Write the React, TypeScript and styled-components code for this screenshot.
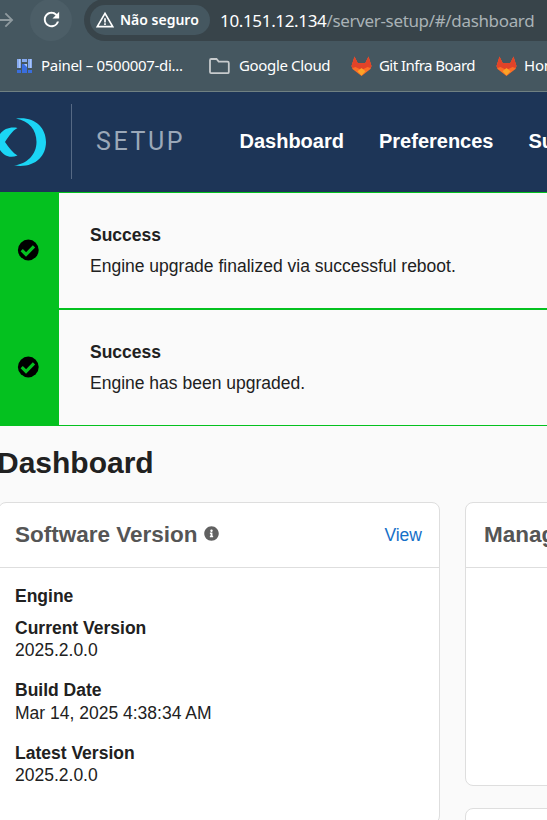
import React from "react";
import styled, { createGlobalStyle } from "styled-components";
import { MdArrowForward, MdRefresh, MdWarningAmber } from "react-icons/md";
import { FaInfoCircle } from "react-icons/fa";

const GlobalStyle = createGlobalStyle`
  * { box-sizing: border-box; }
  body { margin: 0; overflow: hidden; background: #fafafa; }
`;

const Page = styled.div`
  width: 547px;
  height: 820px;
  overflow: hidden;
  background: #fafafa;
  color: #212121;
  font: 17.5px/22px "Liberation Sans", Arial, sans-serif;
  white-space: nowrap;
`;

const BrowserChrome = styled.div`
  height: 92px;
  background: #455760;
  border-bottom: 1px solid #6f8082;
  font-family: "Noto Sans", "Open Sans", sans-serif;
  color: #fff;
`;

const AddressRow = styled.div`
  display: flex;
  align-items: center;
  height: 41px;
  padding-bottom: 2px;
`;

const ForwardButton = styled.div`
  display: flex;
  flex: none;
  width: 30px;
  margin-left: -5px;
  color: #8f9a9f;
  font-size: 22px;
`;

const ReloadButton = styled.div`
  display: flex;
  align-items: center;
  justify-content: center;
  flex: none;
  width: 42px;
  height: 42px;
  margin-left: 5px;
  border-radius: 50%;
  background: #4c5e67;
  font-size: 23px;
`;

const AddressBar = styled.div`
  display: flex;
  align-items: center;
  flex: none;
  width: 500px;
  height: 42px;
  margin-left: 12px;
  padding-left: 6px;
  border-radius: 21px;
  background: #38444a;
`;

const SecurityChip = styled.div`
  display: flex;
  align-items: center;
  width: 120px;
  height: 30px;
  padding-left: 5px;
  border-radius: 15px;
  background: #455760;
  font-size: 14px;
  font-weight: 600;
  svg { width: 20px; height: 20px; margin-right: 5px; }
`;

const Url = styled.span`
  margin-left: 10px;
  padding-top: 2px;
  font-size: 17px;
  letter-spacing: -0.34px;
`;

const UrlPath = styled.span`
  color: #a9b2b6;
`;

const BookmarkRow = styled.div`
  display: flex;
  height: 50px;
  padding-left: 16px;
`;

const Bookmark = styled.div<{ $width: number; $gap: number; $spacing: number }>`
  display: flex;
  align-items: center;
  flex: none;
  width: ${(p) => p.$width}px;
  gap: ${(p) => p.$gap}px;
  font-size: 15px;
  letter-spacing: ${(p) => p.$spacing}px;
  svg { flex: none; }
`;

const BookmarkLabel = styled.span`
  padding-bottom: 2px;
`;

const Header = styled.header`
  display: flex;
  align-items: center;
  height: 100px;
  background: #1d3557;
`;

const Logo = styled.svg`
  flex: none;
  width: 71px;
  height: 100px;
`;

const HeaderRule = styled.div`
  flex: none;
  width: 1px;
  height: 75px;
  margin-bottom: 1px;
  background: #566984;
`;

const ProductName = styled.div`
  flex: none;
  width: 143px;
  padding-left: 24px;
  color: #9ba8b8;
  font: 400 25px/30px Roboto, sans-serif;
  letter-spacing: 2.6px;
`;

const Nav = styled.nav`
  display: flex;
  gap: 35px;
  margin-left: 24.5px;
  padding-bottom: 2px;
  color: #fff;
  font-size: 20px;
  font-weight: 700;
`;

const Alert = styled.section`
  display: flex;
  width: 560px;
  height: 117px;
  border: solid #04c11f;
  border-width: 1px 0;
`;

const AlertIcon = styled.div`
  display: flex;
  align-items: center;
  width: 59px;
  padding: 0 0 2px 17px;
  margin: -1px 0;
  background: #04c11f;
`;

const AlertBody = styled.div`
  padding: 31px 0 0 31px;
`;

const AlertTitle = styled.div`
  font-weight: 700;
`;

const AlertText = styled.div`
  margin-top: 9px;
`;

const Title = styled.h1`
  margin: 19px 0 21px -3px;
  font-size: 30px;
  line-height: 36px;
`;

const Board = styled.main`
  display: grid;
  grid-template-columns: 442px 300px;
  column-gap: 25px;
  margin-left: -2px;
`;

const Column = styled.div`
  display: flex;
  flex-direction: column;
  gap: 22px;
`;

const Card = styled.section<{ $height: number }>`
  height: ${(p) => p.$height}px;
  border: 1px solid #dedede;
  border-radius: 8px;
  background: #fff;
`;

const CardHeader = styled.div<{ $inset: number }>`
  display: flex;
  align-items: center;
  height: 65px;
  padding: 0 17px 2px ${(p) => p.$inset}px;
  border-bottom: 1px solid #dedede;
`;

const CardTitle = styled.h2`
  margin: 0;
  padding-top: 1px;
  color: #555;
  font-size: 22.5px;
  line-height: 28px;
`;

const InfoIcon = styled(FaInfoCircle)`
  width: 15px;
  height: 15px;
  margin: 0 0 1px 6px;
  color: #616161;
`;

const ViewLink = styled.a`
  margin-left: auto;
  padding-top: 2px;
  color: #1670c8;
  font-size: 17.5px;
`;

const Details = styled.div`
  padding: 17px 16px;
`;

const Section = styled.div`
  margin-bottom: 10px;
  font-weight: 700;
`;

const Field = styled.div`
  height: 62.4px;
`;

const FieldLabel = styled.div`
  font-weight: 700;
  line-height: 22.4px;
`;

const GitLabIcon = () => (
  <svg width="21" height="20" viewBox="0 0 20 20">
    <path d="M0 10 3 .5 6.200 7h7.600L17 .5l3 9.500-1 3-9 7-9-7z" fill="#fc6d26" />
    <path d="M0 10 3 .5 6.200 7h7.600L17 .5l3 9.500-1 2-3-1-6 3-6-3-3 1z" fill="#e24329" />
    <path d="m10 12-4 3.200 4 4.400 4-4.400z" fill="#fca326" />
  </svg>
);

const FolderIcon = () => (
  <svg width="21" height="17" viewBox="0 0 21 17" fill="none" stroke="#c7cbcd" strokeWidth="1.8">
    <path d="M1 2.200q0-1.200 1.200-1.200h5.300l2.200 2.600h8.800q1.300 0 1.300 1.300v9q0 1.300-1.300 1.300H2.200Q1 15.200 1 14z" />
  </svg>
);

const PanelIcon = () => (
  <svg width="17" height="17" viewBox="0 0 17 17">
    <path d="M1 1h4v9H1zM6 1h5v3H6zM12 1h4v9h-4z" fill="#86aaf0" />
    <path d="M6 6h5v9H6zM1 12h4v3H1zM12 12h4v3h-4z" fill="#3a6ede" />
    <path d="M3 1h1v9H3zM14 1h1v9h-1zM8 6h3v3z" fill="#a9c6fa" />
  </svg>
);

const CheckIcon = () => (
  <svg width="22" height="22" viewBox="0 0 22 22">
    <circle cx="11.300" cy="11" r="10.400" fill="#000" />
    <path d="m4.700 11.200 4.300 4.300L17 7.300" fill="none" stroke="#04c11f" strokeWidth="3.200" />
  </svg>
);

const alerts = ["Engine upgrade finalized via successful reboot.", "Engine has been upgraded."];

const bookmarks = [
  { label: "Painel – 0500007-di...", Icon: PanelIcon, width: 193, gap: 8, spacing: -0.3 },
  { label: "Google Cloud", Icon: FolderIcon, width: 142, gap: 9, spacing: -0.35 },
  { label: "Git Infra Board", Icon: GitLabIcon, width: 145, gap: 7, spacing: -0.55 },
  { label: "Home", Icon: GitLabIcon, width: 100, gap: 7, spacing: -0.2 },
];

const fields = [
  ["Current Version", "2025.2.0.0"],
  ["Build Date", "Mar 14, 2025 4:38:34 AM"],
  ["Latest Version", "2025.2.0.0"],
];

export default function App() {
  return (
    <Page>
      <GlobalStyle />
      <BrowserChrome>
        <AddressRow>
          <ForwardButton><MdArrowForward /></ForwardButton>
          <ReloadButton><MdRefresh /></ReloadButton>
          <AddressBar>
            <SecurityChip>
              <MdWarningAmber />
              <span>Não seguro</span>
            </SecurityChip>
            <Url>10.151.12.134<UrlPath>/server-setup/#/dashboard</UrlPath></Url>
          </AddressBar>
        </AddressRow>
        <BookmarkRow>
          {bookmarks.map(({ label, Icon, width, gap, spacing }) => (
            <Bookmark key={label} $width={width} $gap={gap} $spacing={spacing}>
              <Icon />
              <BookmarkLabel>{label}</BookmarkLabel>
            </Bookmark>
          ))}
        </BookmarkRow>
      </BrowserChrome>
      <Header>
        <Logo viewBox="0 0 71 100">
          <path fill="#1bd5f5" d="M16 26.500C34 24 46 35 46 50S34 76.500 14 73.500C27 72 36.500 62.500 36.500 50S29 29 16 26.500z" />
          <path fill="#1bd5f5" d="M17.500 36C11 34.500 4 36.500 0 42L-4 50l4 8c4 6 10 8.500 17.500 5.500C13 61 9 56 5 50c4-6 7-11 12.500-14z" />
        </Logo>
        <HeaderRule />
        <ProductName>SETUP</ProductName>
        <Nav>
          <span>Dashboard</span>
          <span>Preferences</span>
          <span>Support</span>
        </Nav>
      </Header>
      {alerts.map((text) => (
        <Alert key={text}>
          <AlertIcon><CheckIcon /></AlertIcon>
          <AlertBody>
            <AlertTitle>Success</AlertTitle>
            <AlertText>{text}</AlertText>
          </AlertBody>
        </Alert>
      ))}
      <Title>Dashboard</Title>
      <Board>
        <Column>
          <Card $height={322}>
            <CardHeader $inset={16}>
              <CardTitle>Software Version</CardTitle>
              <InfoIcon />
              <ViewLink>View</ViewLink>
            </CardHeader>
            <Details>
              <Section>Engine</Section>
              {fields.map(([label, value]) => (
                <Field key={label}>
                  <FieldLabel>{label}</FieldLabel>
                  <div>{value}</div>
                </Field>
              ))}
            </Details>
          </Card>
        </Column>
        <Column>
          <Card $height={284}>
            <CardHeader $inset={18}><CardTitle>Management</CardTitle></CardHeader>
          </Card>
          <Card $height={200} />
        </Column>
      </Board>
    </Page>
  );
}
